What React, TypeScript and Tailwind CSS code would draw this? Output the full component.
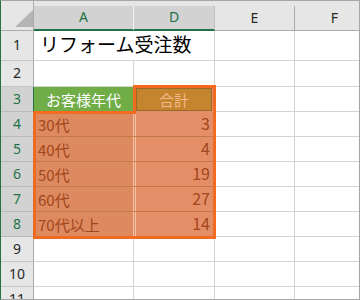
import React from "react";

function RH({ n, sel }: { n: number; sel?: boolean }) {
  return sel ? (
    <div className="flex items-center justify-center border-b border-r border-b-[#b9b9b9] border-r-[#217346] bg-[#d2d2d2] text-[#217346] text-[14px] font-['Noto_Sans',sans-serif] leading-none pb-[1px]">
      {n}
    </div>
  ) : (
    <div className="flex items-center justify-center border-b border-r border-b-[#c6c6c6] border-r-[#ababab] bg-[#e6e6e6] text-[#262626] text-[14px] font-['Noto_Sans',sans-serif] leading-none pb-[1px]">
      {n}
    </div>
  );
}

function E() {
  return <div className="border-r border-b border-[#d4d4d4]" />;
}

const ages = ["30代", "40代", "50代", "60代", "70代以上"];
const totals = [3, 4, 19, 27, 14];

export default function App() {
  return (
    <div className="relative w-[360px] h-[300px] overflow-hidden bg-white border border-t-[#a6a6a6] border-r-[#a6a6a6] border-b-[#a6a6a6] border-l-[#217346]">
      <div className="grid grid-cols-[33px_100px_81px_80px_80px] grid-rows-[5px_25px_30px_26px_25px_25px_25px_25px_25px_25px_25px_25px_25px]">
        {/* corner */}
        <div className="row-span-2 flex items-end justify-end pb-[3px] bg-[#e6e6e6] border-r border-b border-[#ababab]">
          <svg width="18" height="17" viewBox="0 0 18 17">
            <polygon points="18,0 18,17 0,17" fill="#b4b4b4" />
          </svg>
        </div>
        {/* strip */}
        <div className="col-span-4 bg-[#e6e6e6]" />
        {/* column headers */}
        <div className="flex items-center justify-center pb-[2px] bg-[#d2d2d2] text-[#217346] text-[14px] font-['Noto_Sans',sans-serif] border-r border-r-[#f2f2f2] border-b-2 border-b-[#217346]">
          A
        </div>
        <div className="flex items-center justify-center pb-[2px] bg-[#d2d2d2] text-[#217346] text-[14px] font-['Noto_Sans',sans-serif] border-r border-r-[#bfbfbf] border-b-2 border-b-[#217346]">
          D
        </div>
        <div className="flex items-center justify-center pb-[2px] bg-[#e6e6e6] text-[#262626] text-[14px] font-['Noto_Sans',sans-serif] border-r border-r-[#ababab] border-b border-b-[#ababab]">
          E
        </div>
        <div className="flex items-center justify-center pb-[2px] bg-[#e6e6e6] text-[#262626] text-[14px] font-['Noto_Sans',sans-serif] border-r border-r-[#ababab] border-b border-b-[#ababab]">
          F
        </div>

        {/* row 1 */}
        <RH n={1} />
        <div className="flex items-center pl-[6px] pb-[5px] border-b border-[#d4d4d4] whitespace-nowrap text-[19px] leading-none text-black font-['Noto_Sans_CJK_JP',sans-serif] relative z-10">
          リフォーム受注数
        </div>
        <E />
        <E />
        <E />

        {/* row 2 */}
        <RH n={2} />
        <E />
        <E />
        <E />
        <E />

        {/* row 3 */}
        <RH n={3} sel />
        <div className="flex items-center justify-center bg-[#70ad47] border-r border-b border-[#70ad47] text-white text-[15px] leading-none font-['Noto_Sans_CJK_JP',sans-serif]">
          お客様年代
        </div>
        <div className="flex pl-[2px] pr-[3px] pt-[1px] pb-[1px] bg-[#e38e66]">
          <div className="flex-1 flex items-center justify-center bg-[#c4852f] border border-[#9a6a2c] text-[#f7b98c] text-[15px] leading-none font-['Noto_Sans_CJK_JP',sans-serif]">
            合計
          </div>
        </div>
        <E />
        <E />

        {/* rows 4-8 */}
        {ages.map((a, i) => (
          <React.Fragment key={a}>
            <RH n={i + 4} sel />
            <div className="flex items-center pl-[4px] bg-[#dd8a60] border-r border-r-[#f3c3a4] border-b border-b-[#c27a45] text-[#a2461c] text-[15px] leading-none font-['Noto_Sans_CJK_JP',sans-serif]">
              {a}
            </div>
            <div className="flex items-center justify-end pr-[5px] pb-[3px] bg-[#e38e66] shadow-[inset_1px_0_0_#e38e66,inset_2px_0_0_#f3c3a4] border-b border-b-[#c27a45] text-[#a2461c] text-[16px] leading-none font-['Noto_Sans_CJK_JP',sans-serif]">
              {totals[i]}
            </div>
            <E />
            <E />
          </React.Fragment>
        ))}

        {/* rows 9-11 */}
        {[9, 10, 11].map((n) => (
          <React.Fragment key={n}>
            <RH n={n} />
            <E />
            <E />
            <E />
            <E />
          </React.Fragment>
        ))}
      </div>

      {/* range outlines */}
      <div className="absolute left-[32px] top-[110px] w-[103px] h-[128px] border-t-[3px] border-l-[3px] border-b-[3px] border-[#f26b21]" />
      <div className="absolute left-[132px] top-[84px] w-[83px] h-[154px] border-t-[3px] border-r-[3px] border-b-[3px] border-[#f26b21]" />
      <div className="absolute left-[132px] top-[84px] w-[3px] h-[29px] bg-[#f26b21]" />
    </div>
  );
}
